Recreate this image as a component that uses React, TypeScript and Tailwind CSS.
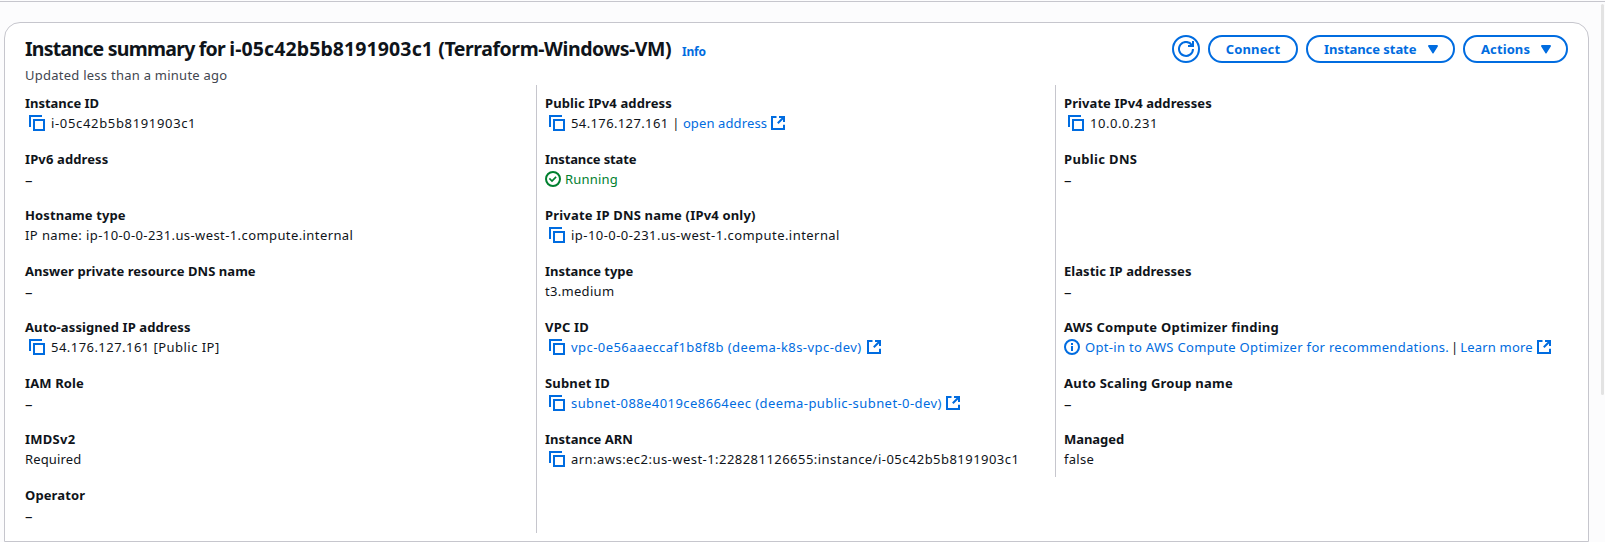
import type { ReactNode } from 'react';

const svgProps = {
  width: 16,
  height: 16,
  viewBox: '0 0 16 16',
  fill: 'none',
  stroke: 'currentColor',
  strokeWidth: 2,
  className: 'shrink-0',
} as const;

function CopyIcon() {
  return (
    <button className="ml-1 mr-1.5 shrink-0 text-[#006ce0]" aria-label="Copy">
      <svg {...svgProps} className="block">
        <path d="M15 5H5v10h10V5Z" />
        <path d="M13 1H1v11" />
      </svg>
    </button>
  );
}

function ExternalIcon() {
  return (
    <svg {...svgProps}>
      <path d="M14 9.8V14H2V2h4.5" />
      <path d="M9 2h5v5" />
      <path d="m7.8 8.2 6-6" />
    </svg>
  );
}

function SuccessIcon() {
  return (
    <svg {...svgProps}>
      <circle cx="8" cy="8" r="7" />
      <path d="m5 8 2 2 3.5-3.5" strokeLinecap="square" strokeWidth="1.7" />
    </svg>
  );
}

function InfoIcon() {
  return (
    <svg {...svgProps}>
      <circle cx="8" cy="8" r="7" />
      <path d="M8 4v2M8 7v5" />
    </svg>
  );
}

function RefreshIcon() {
  return (
    <svg {...svgProps}>
      <path d="M10 5h5V0" />
      <path d="M15 8a7 7 0 1 1-1.2-4" />
    </svg>
  );
}

function CaretIcon() {
  return (
    <svg width="10" height="9" viewBox="0 0 10 9" fill="currentColor" className="shrink-0">
      <path d="M.9 0h8.2a.9.9 0 0 1 .7 1.4L5.7 8.1a.85.85 0 0 1-1.4 0L.2 1.4A.9.9 0 0 1 .9 0Z" />
    </svg>
  );
}

function Link({ children, className, external }: { children: ReactNode; className: string; external?: boolean }) {
  return (
    <a href="#" className="flex items-center gap-[3px] text-[#006ce0]">
      <span className={className}>{children}</span>
      {external && <ExternalIcon />}
    </a>
  );
}

function Field({ label, tracking, children }: { label: string; tracking: string; children?: ReactNode }) {
  return (
    <div className="h-14 py-2">
      <div className={`text-[13px] leading-5 font-bold ${tracking}`}>{label}</div>
      <div className="flex h-5 items-center">{children ?? <span className="pt-0.5 text-[15px]">–</span>}</div>
    </div>
  );
}

export default function App() {
  return (
    <div className="flex h-[542px] w-full flex-col overflow-hidden bg-[#fcfcfd] pt-px font-['Noto_Sans',sans-serif] text-[13px] leading-5 whitespace-nowrap text-[#0f141a]">
      <div className="h-px shrink-0 bg-[#c6c6cd]" />
      <div className="flex min-h-0 grow">
        <main className="mt-5 ml-1 h-[520px] w-[1585px] rounded-t-2xl border border-[#c6c6cd] bg-white pt-3 pl-5">
          <header className="flex h-[50px] justify-between pr-5">
            <div className="pt-0.5">
              <div className="flex items-baseline">
                <h1 className="w-[657px] text-[19.5px] leading-6 font-bold">
                  <span className="tracking-[-0.76px]">Instance summary for </span>
                  <span className="tracking-[0.1px]">i-05c42b5b8191903c1 </span>
                  <span className="tracking-[-0.43px]">(Terraform-Windows-VM)</span>
                </h1>
                <a href="#" className="text-[12px] leading-4 font-bold tracking-[-0.2px] text-[#006ce0]">
                  Info
                </a>
              </div>
              <p className="mt-1 leading-5 tracking-[0.25px] text-[#424650]">Updated less than a minute ago</p>
            </div>
            <div className="flex h-7 gap-2 text-[13px] font-bold text-[#006ce0]">
              <button aria-label="Refresh" className="flex w-7 items-center justify-center rounded-full border-2 border-[#006ce0]">
                <RefreshIcon />
              </button>
              <button className="w-[90px] rounded-full border-2 border-[#006ce0] tracking-[0.15px]">Connect</button>
              <button className="flex w-[149px] items-center justify-between rounded-full border-2 border-[#006ce0] pr-[15px] pl-4">
                <span className="tracking-[-0.05px]">Instance state</span>
                <CaretIcon />
              </button>
              <button className="flex w-[105px] items-center justify-between rounded-full border-2 border-[#006ce0] pr-[15px] pl-4">
                <span className="tracking-[0.1px]">Actions</span>
                <CaretIcon />
              </button>
            </div>
          </header>

          <div className="flex items-start">
            <section className="w-[511px]">
              <Field label="Instance ID" tracking="tracking-[-0.02px]">
                <CopyIcon />
                <span className="tracking-[0.66px]">i-05c42b5b8191903c1</span>
              </Field>
              <Field label="IPv6 address" tracking="tracking-[0.12px]" />
              <Field label="Hostname type" tracking="tracking-[0.1px]">
                <span className="tracking-[0.41px]">IP name: ip-10-0-0-231.us-west-1.compute.internal</span>
              </Field>
              <Field label="Answer private resource DNS name" tracking="tracking-[0.05px]" />
              <Field label="Auto-assigned IP address" tracking="tracking-[0.1px]">
                <CopyIcon />
                <span className="tracking-[0.46px]">54.176.127.161 [Public IP]</span>
              </Field>
              <Field label="IAM Role" tracking="tracking-[0.12px]" />
              <Field label="IMDSv2" tracking="tracking-[0.25px]">
                <span className="tracking-[0.15px]">Required</span>
              </Field>
              <Field label="Operator" tracking="tracking-[0.12px]" />
            </section>

            <section className="w-[519px] border-l border-[#c6c6cd] pl-2">
              <Field label="Public IPv4 address" tracking="tracking-[0.12px]">
                <CopyIcon />
                <span className="mr-[3px] tracking-[0.38px]">54.176.127.161 |</span>
                <Link external className="tracking-[0.12px]">open address</Link>
              </Field>
              <Field label="Instance state" tracking="tracking-[-0.12px]">
                <span className="flex items-center gap-1 text-[#00802f]">
                  <SuccessIcon />
                  <span className="tracking-[0.18px]">Running</span>
                </span>
              </Field>
              <Field label="Private IP DNS name (IPv4 only)" tracking="tracking-[0.18px]">
                <CopyIcon />
                <span className="tracking-[0.45px]">ip-10-0-0-231.us-west-1.compute.internal</span>
              </Field>
              <Field label="Instance type" tracking="tracking-[-0.05px]">
                <span className="tracking-[0.3px]">t3.medium</span>
              </Field>
              <Field label="VPC ID" tracking="tracking-[0.2px]">
                <CopyIcon />
                <Link external className="mr-px tracking-[0.44px]">vpc-0e56aaeccaf1b8f8b (deema-k8s-vpc-dev)</Link>
              </Field>
              <Field label="Subnet ID" tracking="tracking-[0.15px]">
                <CopyIcon />
                <Link external className="tracking-[0.43px]">subnet-088e4019ce8664eec (deema-public-subnet-0-dev)</Link>
              </Field>
              <Field label="Instance ARN" tracking="tracking-normal">
                <CopyIcon />
                <span className="tracking-[0.46px]">arn:aws:ec2:us-west-1:228281126655:instance/i-05c42b5b8191903c1</span>
              </Field>
              <div className="h-14" />
            </section>

            <section className="border-l border-[#c6c6cd] pl-2">
              <Field label="Private IPv4 addresses" tracking="tracking-[0.08px]">
                <CopyIcon />
                <span className="tracking-[0.55px]">10.0.0.231</span>
              </Field>
              <Field label="Public DNS" tracking="tracking-[0.35px]" />
              <div className="h-14" />
              <Field label="Elastic IP addresses" tracking="tracking-[0.05px]" />
              <Field label="AWS Compute Optimizer finding" tracking="tracking-[0.23px]">
                <span className="mr-[5px] flex text-[#006ce0]">
                  <InfoIcon />
                </span>
                <Link className="tracking-[0.31px]">Opt-in to AWS Compute Optimizer for recommendations.</Link>
                <span className="mr-[2px] ml-[2px]">|</span>
                <Link external className="tracking-[0.18px]">Learn more</Link>
              </Field>
              <Field label="Auto Scaling Group name" tracking="tracking-[0.22px]" />
              <Field label="Managed" tracking="tracking-[-0.05px]">
                <span className="tracking-[0.3px]">false</span>
              </Field>
            </section>
          </div>
        </main>
        <div className="mt-0.5 ml-3 h-[391px] w-[3px] rounded-full bg-[#e3e3e3]" />
      </div>
    </div>
  );
}
